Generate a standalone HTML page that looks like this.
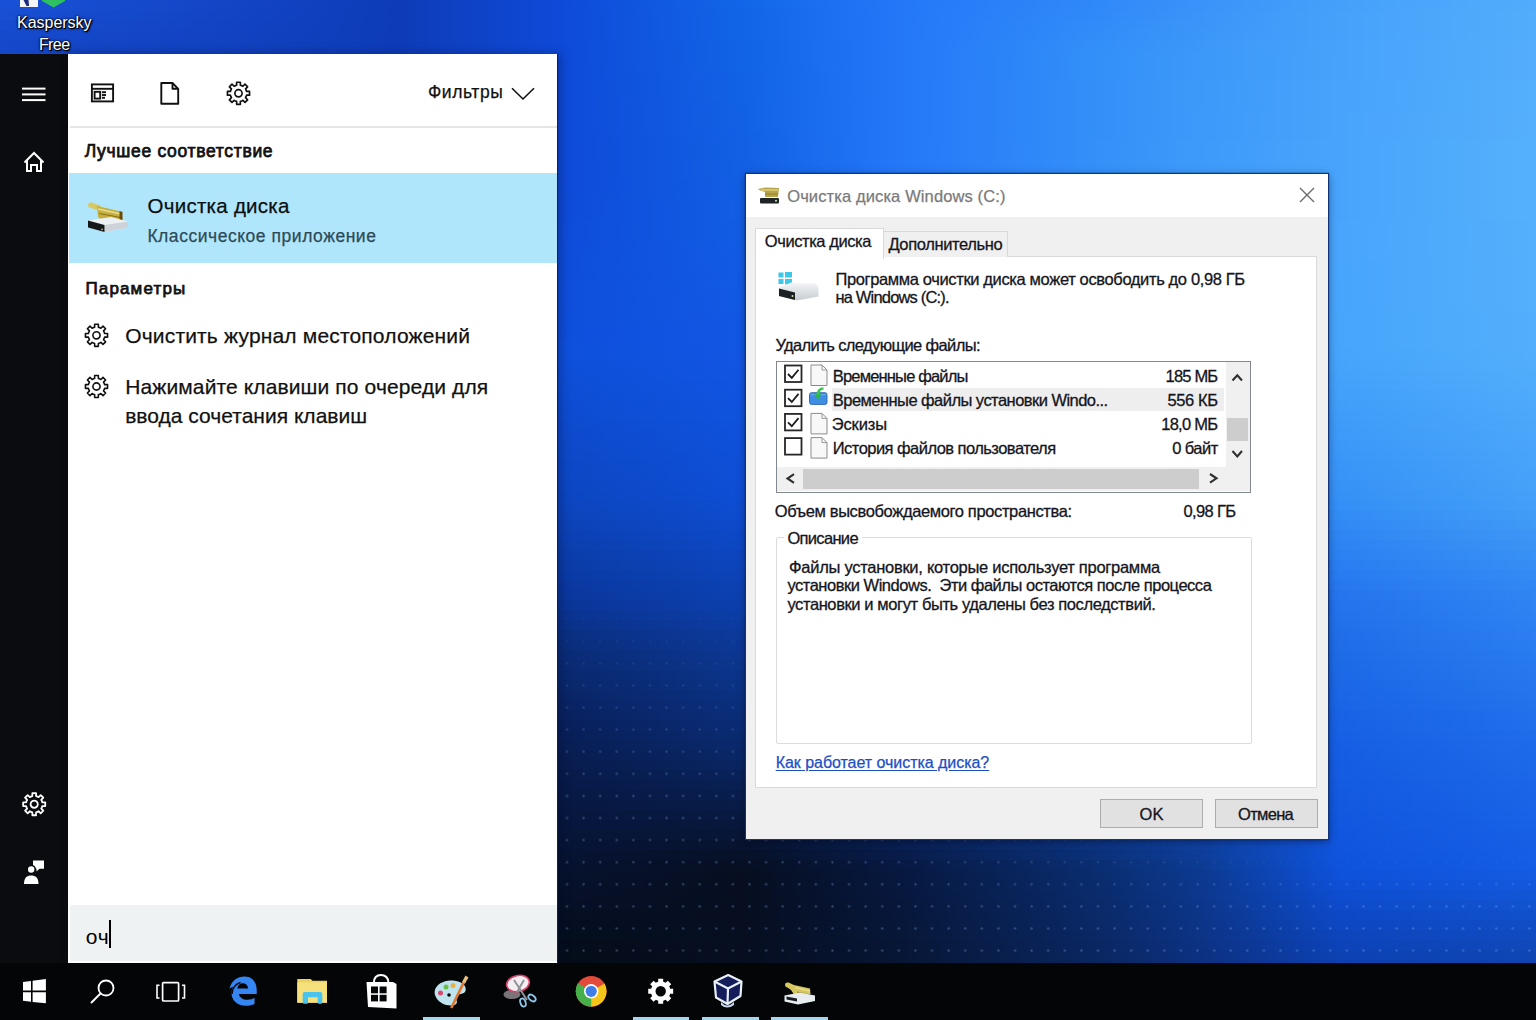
<!DOCTYPE html>
<html><head><meta charset="utf-8"><style>
html,body{margin:0;padding:0}
body{width:1536px;height:1020px;overflow:hidden;position:relative;font-family:"Liberation Sans", sans-serif;}
.a{position:absolute}
.t{position:absolute;white-space:pre;line-height:1;-webkit-text-stroke:0.25px currentColor}
svg{position:absolute;overflow:visible}

#bg{left:0;top:0;width:1536px;height:1020px;
 background:
  radial-gradient(ellipse 1000px 520px at 560px 1010px, rgba(4,9,22,1) 0%, rgba(5,13,32,0.95) 25%, rgba(8,28,80,0.72) 50%, rgba(12,45,130,0.3) 78%, rgba(12,50,150,0) 100%),
  linear-gradient(180deg, rgba(140,200,255,0.14) 0%, rgba(0,0,0,0) 40%, rgba(0,15,70,0.12) 75%, rgba(0,15,70,0.32) 100%),
  linear-gradient(90deg, #1246c6 0%, #1850d2 36%, #1f62e0 55%, #2f80ee 78%, #4aa2f6 100%);
}
#sidebar{left:0;top:54px;width:68px;height:909px;background:#0a0c0f}
#panel{left:68px;top:54px;width:489px;height:909px;background:#fff;box-shadow:1px 0 0 #0a2060,3px 0 10px rgba(0,10,40,0.35)}
#sep{left:70px;top:126px;width:487px;height:2px;background:#e6e6e6}
#hl{left:69px;top:173px;width:488px;height:90px;background:#b0e6fc}
#search{left:70px;top:905px;width:487px;height:56px;background:#eff2f2}
#cursor{left:109px;top:920px;width:2px;height:28px;background:#000}
#taskbar{left:0;top:963px;width:1536px;height:57px;background:#040507}
.ind{top:1017px;height:3px;background:#a6d4ec}
#dlg{left:745px;top:173px;width:582px;height:665px;background:#f0f0f0;border:1px solid #12347a;box-shadow:0 0 1px #0a2050,0 2px 8px rgba(0,0,20,0.35)}
#dtitle{left:746px;top:174px;width:582px;height:43px;background:#fff}
#tabpage{left:755px;top:256px;width:560px;height:530px;background:#fff;border:1px solid #d9d9d9}
#tab1{left:755px;top:228px;width:127px;height:30px;background:#fff;border:1px solid #d9d9d9;border-bottom:none}
#tab2{left:882px;top:231px;width:125px;height:25px;background:#f0f0f0;border:1px solid #d9d9d9;border-bottom:none;border-left:none}
#list{left:776px;top:361px;width:473px;height:130px;background:#fff;border:1px solid #828790}
#rowhl{left:832px;top:388px;width:392px;height:23px;background:#eeeeee}
#vsb{left:1226px;top:362px;width:24px;height:104px;background:#f0f0f0}
#vthumb{left:1227px;top:418px;width:21px;height:23px;background:#cdcdcd}
#hsb{left:777px;top:467px;width:449px;height:24px;background:#f0f0f0}
#hthumb{left:803px;top:469px;width:396px;height:20px;background:#cdcdcd}
#corner{left:1226px;top:466px;width:24px;height:25px;background:#f0f0f0}
#grp{left:776px;top:537px;width:474px;height:205px;border:1px solid #dcdcdc;border-radius:2px}
#grplbl{left:784px;top:530px;width:78px;height:14px;background:#fff}
.btn{top:799px;width:101px;height:27px;background:#e1e1e1;border:1px solid #adadad}

</style></head><body>

<div class="a" style="left:0;top:0px;width:1536px;height:10px;background:linear-gradient(90deg,#1951d6 0.00%,#1446c7 13.02%,#0e3cb8 26.04%,#0e4ad8 36.46%,#1266e8 48.50%,#2478f8 58.59%,#3089f8 71.61%,#3a93f9 78.12%,#45a0fa 87.24%,#52acfc 100.00%)"></div>
<div class="a" style="left:0;top:10px;width:1536px;height:10px;background:linear-gradient(90deg,#184fd3 0.00%,#1345c6 13.02%,#0e3cb8 26.04%,#0e4ad8 36.46%,#1265e7 48.50%,#2478f8 58.59%,#318af8 71.61%,#3b94f9 78.12%,#46a1fa 87.24%,#53adfc 100.00%)"></div>
<div class="a" style="left:0;top:20px;width:1536px;height:10px;background:linear-gradient(90deg,#174cd0 0.00%,#1344c4 13.02%,#0e3cb8 26.04%,#0e4ad8 36.46%,#1265e7 48.50%,#2478f8 58.59%,#318cf8 71.61%,#3b95f9 78.12%,#46a1fa 87.24%,#53adfc 100.00%)"></div>
<div class="a" style="left:0;top:30px;width:1536px;height:10px;background:linear-gradient(90deg,#164acd 0.00%,#1343c3 13.02%,#0e3cb8 26.04%,#0e4ad8 36.46%,#1265e7 48.50%,#2478f8 58.59%,#328df8 71.61%,#3b96f9 78.12%,#46a1fb 87.24%,#53adfc 100.00%)"></div>
<div class="a" style="left:0;top:40px;width:1536px;height:10px;background:linear-gradient(90deg,#1548ca 0.00%,#1243c1 13.02%,#0e3cb8 26.04%,#0e4ad8 36.46%,#1264e6 48.50%,#2478f8 58.59%,#338ff8 71.61%,#3c97f9 78.12%,#47a2fb 87.24%,#54aefc 100.00%)"></div>
<div class="a" style="left:0;top:50px;width:1536px;height:10px;background:linear-gradient(90deg,#1446c8 0.00%,#1242c0 13.02%,#0e3cb8 26.04%,#0e4ad8 36.46%,#1264e6 48.50%,#2478f8 58.59%,#3390f8 71.61%,#3c98f9 78.12%,#47a2fb 87.24%,#54aefc 100.00%)"></div>
<div class="a" style="left:0;top:60px;width:1536px;height:10px;background:linear-gradient(90deg,#1446c8 0.00%,#1242c0 13.02%,#0e3cb8 26.04%,#0e4ad8 36.46%,#1264e6 48.50%,#2478f8 58.59%,#3390f8 71.61%,#3c98f9 78.12%,#47a2fb 87.24%,#54aefc 100.00%)"></div>
<div class="a" style="left:0;top:70px;width:1536px;height:10px;background:linear-gradient(90deg,#1446c8 0.00%,#1242c0 13.02%,#0e3cb8 26.04%,#0e4ad8 36.46%,#1263e6 48.50%,#2478f8 58.59%,#3390f8 71.61%,#3c98f9 78.12%,#47a2fb 87.24%,#54aefc 100.00%)"></div>
<div class="a" style="left:0;top:80px;width:1536px;height:10px;background:linear-gradient(90deg,#1446c8 0.00%,#1242c0 13.02%,#0e3cb8 26.04%,#0e4ad8 36.46%,#1263e5 48.50%,#2478f8 58.59%,#3490f8 71.61%,#3d99f9 78.12%,#47a3fb 87.24%,#54affc 100.00%)"></div>
<div class="a" style="left:0;top:90px;width:1536px;height:10px;background:linear-gradient(90deg,#1446c8 0.00%,#1242c0 13.02%,#0e3cb8 26.04%,#0e4ad8 36.46%,#1263e5 48.50%,#2478f8 58.59%,#3490f8 71.61%,#3d99f9 78.12%,#47a3fb 87.24%,#54affc 100.00%)"></div>
<div class="a" style="left:0;top:100px;width:1536px;height:10px;background:linear-gradient(90deg,#1446c8 0.00%,#1242c0 13.02%,#0e3cb8 26.04%,#0e4ad8 36.46%,#1262e5 48.50%,#2478f8 58.59%,#3490f8 71.61%,#3d99f9 78.12%,#47a3fb 87.24%,#54affc 100.00%)"></div>
<div class="a" style="left:0;top:110px;width:1536px;height:10px;background:linear-gradient(90deg,#1446c8 0.00%,#1242c0 13.02%,#0e3cb8 26.04%,#0e4ad8 36.46%,#1262e5 48.50%,#2478f8 58.59%,#3490f8 71.61%,#3d99fa 78.12%,#48a3fb 87.24%,#55affc 100.00%)"></div>
<div class="a" style="left:0;top:120px;width:1536px;height:10px;background:linear-gradient(90deg,#1446c8 0.00%,#1242c0 13.02%,#0e3cb8 26.04%,#0e4ad8 36.46%,#1262e5 48.50%,#2478f8 58.59%,#3490f8 71.61%,#3d99fa 78.12%,#48a3fb 87.24%,#55affc 100.00%)"></div>
<div class="a" style="left:0;top:130px;width:1536px;height:10px;background:linear-gradient(90deg,#1446c8 0.00%,#1242c0 13.02%,#0e3cb8 26.04%,#0e4ad8 36.46%,#1261e5 48.50%,#2478f8 58.59%,#3490f8 71.61%,#3d99fa 78.12%,#48a3fb 87.24%,#55affc 100.00%)"></div>
<div class="a" style="left:0;top:140px;width:1536px;height:10px;background:linear-gradient(90deg,#1446c8 0.00%,#1242c0 13.02%,#0e3cb8 26.04%,#0e4ad8 36.46%,#1261e4 48.50%,#2478f8 58.59%,#3590f8 71.61%,#3e9afa 78.12%,#48a4fb 87.24%,#55b0fc 100.00%)"></div>
<div class="a" style="left:0;top:150px;width:1536px;height:10px;background:linear-gradient(90deg,#1446c8 0.00%,#1242c0 13.02%,#0e3cb8 26.04%,#0e4ad8 36.46%,#1261e4 48.50%,#2478f8 58.59%,#3590f8 71.61%,#3e9afa 78.12%,#48a4fb 87.24%,#55b0fc 100.00%)"></div>
<div class="a" style="left:0;top:160px;width:1536px;height:10px;background:linear-gradient(90deg,#1446c8 0.00%,#1242c0 13.02%,#0e3cb8 26.04%,#0e4ad8 36.46%,#1260e4 48.50%,#2478f8 58.59%,#3590f8 71.61%,#3e9afa 78.12%,#48a4fb 87.24%,#55b0fc 100.00%)"></div>
<div class="a" style="left:0;top:170px;width:1536px;height:10px;background:linear-gradient(90deg,#1446c8 0.00%,#1242c0 13.02%,#0e3cb8 26.04%,#0e4ad8 36.46%,#1260e4 48.50%,#2478f8 58.59%,#3590f8 71.61%,#3e9afa 78.12%,#48a4fb 87.24%,#55b0fc 100.00%)"></div>
<div class="a" style="left:0;top:180px;width:1536px;height:10px;background:linear-gradient(90deg,#1446c8 0.00%,#1242c0 13.02%,#0e3cb8 26.04%,#0e4ad8 36.46%,#125fe4 48.50%,#2478f8 58.59%,#3590f8 71.61%,#3e9afa 78.12%,#48a4fb 87.24%,#55b0fc 100.00%)"></div>
<div class="a" style="left:0;top:190px;width:1536px;height:10px;background:linear-gradient(90deg,#1446c8 0.00%,#1242c0 13.02%,#0e3cb8 26.04%,#0e4bd8 36.46%,#125fe4 48.50%,#2477f7 58.59%,#348ff8 71.61%,#3e9afa 78.12%,#48a4fb 87.24%,#55b0fc 100.00%)"></div>
<div class="a" style="left:0;top:200px;width:1536px;height:10px;background:linear-gradient(90deg,#1446c8 0.00%,#1242c0 13.02%,#0e3cb8 26.04%,#0e4bd9 36.46%,#125ee4 48.50%,#2377f7 58.59%,#348ff8 71.61%,#3d99fa 78.12%,#48a4fb 87.24%,#55b0fc 100.00%)"></div>
<div class="a" style="left:0;top:210px;width:1536px;height:10px;background:linear-gradient(90deg,#1446c8 0.00%,#1242c0 13.02%,#0e3cb8 26.04%,#0e4bd9 36.46%,#125ee4 48.50%,#2376f6 58.59%,#348ef8 71.61%,#3d99fa 78.12%,#48a4fb 87.24%,#55b0fc 100.00%)"></div>
<div class="a" style="left:0;top:220px;width:1536px;height:10px;background:linear-gradient(90deg,#1446c8 0.00%,#1242c0 13.02%,#0e3cb8 26.04%,#0e4cd9 36.46%,#125de4 48.50%,#2376f6 58.59%,#348ef8 71.61%,#3d99fa 78.12%,#48a5fb 87.24%,#54affc 100.00%)"></div>
<div class="a" style="left:0;top:230px;width:1536px;height:10px;background:linear-gradient(90deg,#1446c8 0.00%,#1242c0 13.02%,#0e3cb8 26.04%,#0e4cd9 36.46%,#125de4 48.50%,#2375f5 58.59%,#338df8 71.61%,#3d99fa 78.12%,#48a5fb 87.24%,#54affc 100.00%)"></div>
<div class="a" style="left:0;top:240px;width:1536px;height:10px;background:linear-gradient(90deg,#1446c8 0.00%,#1242c0 13.02%,#0e3cb8 26.04%,#0e4cda 36.46%,#125ce4 48.50%,#2275f5 58.59%,#338df8 71.61%,#3c98fa 78.12%,#48a5fb 87.24%,#54affc 100.00%)"></div>
<div class="a" style="left:0;top:250px;width:1536px;height:10px;background:linear-gradient(90deg,#1446c8 0.00%,#1242c0 13.02%,#0e3cb8 26.04%,#0e4dda 36.46%,#125be4 48.50%,#2274f4 58.59%,#338cf8 71.61%,#3c98fa 78.12%,#48a5fb 87.24%,#54affc 100.00%)"></div>
<div class="a" style="left:0;top:260px;width:1536px;height:10px;background:linear-gradient(90deg,#1446c8 0.00%,#1242c0 13.02%,#0e3cb8 26.04%,#0e4dda 36.46%,#125be4 48.50%,#2274f4 58.59%,#328cf8 71.61%,#3c98fa 78.12%,#47a5fb 87.24%,#54affc 100.00%)"></div>
<div class="a" style="left:0;top:270px;width:1536px;height:10px;background:linear-gradient(90deg,#1446c8 0.00%,#1242c0 13.02%,#0e3cb8 26.04%,#0e4dda 36.46%,#125ae4 48.50%,#2273f3 58.59%,#328bf8 71.61%,#3c98fa 78.12%,#47a5fb 87.24%,#54affc 100.00%)"></div>
<div class="a" style="left:0;top:280px;width:1536px;height:10px;background:linear-gradient(90deg,#1446c8 0.00%,#1242c0 13.02%,#0e3cb8 26.04%,#0e4edb 36.46%,#125ae4 48.50%,#2173f3 58.59%,#328bf8 71.61%,#3b97fa 78.12%,#47a5fb 87.24%,#54affc 100.00%)"></div>
<div class="a" style="left:0;top:290px;width:1536px;height:10px;background:linear-gradient(90deg,#1446c8 0.00%,#1242c0 13.02%,#0e3cb8 26.04%,#0e4edb 36.46%,#1259e4 48.50%,#2173f3 58.59%,#328bf8 71.61%,#3b97fa 78.12%,#47a5fb 87.24%,#54affc 100.00%)"></div>
<div class="a" style="left:0;top:300px;width:1536px;height:10px;background:linear-gradient(90deg,#1446c8 0.00%,#1242c0 13.02%,#0e3cb8 26.04%,#0e4edb 36.46%,#1259e4 48.50%,#2172f2 58.59%,#318af8 71.61%,#3b97fa 78.12%,#47a5fb 87.24%,#54affc 100.00%)"></div>
<div class="a" style="left:0;top:310px;width:1536px;height:10px;background:linear-gradient(90deg,#1446c8 0.00%,#1242c0 13.02%,#0e3cb8 26.04%,#0e4fdb 36.46%,#1258e4 48.50%,#2172f2 58.59%,#318af8 71.61%,#3b97fa 78.12%,#47a6fb 87.24%,#53aefc 100.00%)"></div>
<div class="a" style="left:0;top:320px;width:1536px;height:10px;background:linear-gradient(90deg,#1446c8 0.00%,#1242c0 13.02%,#0e3cb8 26.04%,#0e4fdb 36.46%,#1257e4 48.50%,#2171f1 58.59%,#3189f8 71.61%,#3b97fa 78.12%,#47a6fb 87.24%,#53aefc 100.00%)"></div>
<div class="a" style="left:0;top:330px;width:1536px;height:10px;background:linear-gradient(90deg,#1446c8 0.00%,#1242c0 13.02%,#0e3cb8 26.04%,#0e4fdc 36.46%,#1257e4 48.50%,#2071f1 58.59%,#3089f8 71.61%,#3a96fa 78.12%,#47a6fb 87.24%,#53aefc 100.00%)"></div>
<div class="a" style="left:0;top:340px;width:1536px;height:10px;background:linear-gradient(90deg,#1446c8 0.00%,#1242c0 13.02%,#0e3cb8 26.04%,#0e50dc 36.46%,#1256e4 48.50%,#2070f0 58.59%,#3088f8 71.61%,#3a96fa 78.12%,#47a6fb 87.24%,#53aefc 100.00%)"></div>
<div class="a" style="left:0;top:350px;width:1536px;height:10px;background:linear-gradient(90deg,#1446c8 0.00%,#1242c0 13.02%,#0e3cb8 26.04%,#0e50db 36.46%,#1256e3 48.50%,#2070f0 58.59%,#3088f8 71.61%,#3a96fa 78.12%,#46a5fb 87.24%,#52aefc 100.00%)"></div>
<div class="a" style="left:0;top:360px;width:1536px;height:10px;background:linear-gradient(90deg,#1446c8 0.00%,#1242c0 13.02%,#0e3cb8 26.04%,#0e4fd9 36.46%,#1255e2 48.50%,#1f6fef 58.59%,#2f87f7 71.61%,#3995f9 78.12%,#45a4fa 87.24%,#52adfc 100.00%)"></div>
<div class="a" style="left:0;top:370px;width:1536px;height:10px;background:linear-gradient(90deg,#1446c8 0.00%,#1242c0 13.02%,#0e3cb8 26.04%,#0e4ed7 36.46%,#1155e1 48.50%,#1f6fef 58.59%,#2f87f7 71.61%,#3894f9 78.12%,#44a2fa 87.24%,#50acfb 100.00%)"></div>
<div class="a" style="left:0;top:380px;width:1536px;height:10px;background:linear-gradient(90deg,#1446c8 0.00%,#1242c0 13.02%,#0e3cb8 26.04%,#0e4ed5 36.46%,#1154e0 48.50%,#1f6eee 58.59%,#2f86f6 71.61%,#3893f9 78.12%,#43a1fa 87.24%,#50abfb 100.00%)"></div>
<div class="a" style="left:0;top:390px;width:1536px;height:10px;background:linear-gradient(90deg,#1446c8 0.00%,#1242c0 13.02%,#0e3cb8 26.04%,#0d4dd4 36.46%,#1154df 48.50%,#1e6eee 58.59%,#2e86f6 71.61%,#3792f8 78.12%,#429ffa 87.24%,#4eaafb 100.00%)"></div>
<div class="a" style="left:0;top:400px;width:1536px;height:10px;background:linear-gradient(90deg,#1446c8 0.00%,#1242c0 13.02%,#0e3cb8 26.04%,#0d4cd2 36.46%,#1153de 48.50%,#1e6ded 58.59%,#2e85f5 71.61%,#3691f8 78.12%,#409ef9 87.24%,#4ea9fb 100.00%)"></div>
<div class="a" style="left:0;top:410px;width:1536px;height:10px;background:linear-gradient(90deg,#1446c8 0.00%,#1242c0 13.02%,#0e3cb8 26.04%,#0d4cd0 36.46%,#1053dd 48.50%,#1d6ded 58.59%,#2d85f5 71.61%,#3690f7 78.12%,#3f9cf9 87.24%,#4ca8fa 100.00%)"></div>
<div class="a" style="left:0;top:420px;width:1536px;height:10px;background:linear-gradient(90deg,#1446c8 0.00%,#1242c0 13.02%,#0e3cb8 26.04%,#0d4bce 36.46%,#1052dc 48.50%,#1d6cec 58.59%,#2d84f4 71.61%,#358ff7 78.12%,#3e9bf8 87.24%,#4ca7fa 100.00%)"></div>
<div class="a" style="left:0;top:430px;width:1536px;height:10px;background:linear-gradient(90deg,#1446c8 0.00%,#1242c0 13.02%,#0e3cb8 26.04%,#0d4acc 36.46%,#1051db 48.50%,#1d6beb 58.59%,#2d83f3 71.61%,#348ef7 78.12%,#3d9af8 87.24%,#4aa6fa 100.00%)"></div>
<div class="a" style="left:0;top:440px;width:1536px;height:10px;background:linear-gradient(90deg,#1446c8 0.00%,#1242c0 13.02%,#0e3cb8 26.04%,#0d4aca 36.46%,#0f51da 48.50%,#1c6beb 58.59%,#2c83f3 71.61%,#348df6 78.12%,#3c98f8 87.24%,#4aa5f9 100.00%)"></div>
<div class="a" style="left:0;top:450px;width:1536px;height:10px;background:linear-gradient(90deg,#1446c8 0.00%,#1242c0 13.02%,#0e3cb8 26.04%,#0d49c8 36.46%,#0f50d9 48.50%,#1c6aea 58.59%,#2c82f2 71.61%,#338cf6 78.12%,#3a97f8 87.24%,#48a4f9 100.00%)"></div>
<div class="a" style="left:0;top:460px;width:1536px;height:10px;background:linear-gradient(90deg,#1446c8 0.00%,#1242c0 13.02%,#0e3cb8 26.04%,#0c48c7 36.46%,#0f50d8 48.50%,#1b6aea 58.59%,#2b82f2 71.61%,#328bf5 78.12%,#3995f7 87.24%,#48a3f9 100.00%)"></div>
<div class="a" style="left:0;top:470px;width:1536px;height:10px;background:linear-gradient(90deg,#1446c8 0.00%,#1242c0 13.02%,#0e3cb8 26.04%,#0c48c5 36.46%,#0f4fd7 48.50%,#1b69e9 58.59%,#2b81f1 71.61%,#328af5 78.12%,#3894f7 87.24%,#46a2f9 100.00%)"></div>
<div class="a" style="left:0;top:480px;width:1536px;height:10px;background:linear-gradient(90deg,#1446c8 0.00%,#1242c0 13.02%,#0e3cb8 26.04%,#0c47c3 36.46%,#0e4fd6 48.50%,#1b69e9 58.59%,#2b81f1 71.61%,#3189f5 78.12%,#3792f6 87.24%,#46a1f8 100.00%)"></div>
<div class="a" style="left:0;top:490px;width:1536px;height:10px;background:linear-gradient(90deg,#1446c8 0.00%,#1242c0 13.02%,#0e3cb8 26.04%,#0c46c1 36.46%,#0e4ed5 48.50%,#1a68e8 58.59%,#2a80f0 71.61%,#3088f4 78.12%,#3691f6 87.24%,#44a0f8 100.00%)"></div>
<div class="a" style="left:0;top:500px;width:1536px;height:10px;background:linear-gradient(90deg,#1446c8 0.00%,#1242c0 13.02%,#0e3cb8 26.04%,#0c45be 36.46%,#0e4dd2 48.50%,#1a67e7 58.59%,#297ff0 71.61%,#2f87f4 78.12%,#348ff6 87.24%,#439ff8 100.00%)"></div>
<div class="a" style="left:0;top:510px;width:1536px;height:10px;background:linear-gradient(90deg,#1446c8 0.00%,#1242c0 13.02%,#0e3cb8 26.04%,#0c44ba 36.46%,#0e4ccf 48.50%,#1966e6 58.59%,#287def 71.61%,#2e84f3 78.12%,#328cf5 87.24%,#419cf7 100.00%)"></div>
<div class="a" style="left:0;top:520px;width:1536px;height:10px;background:linear-gradient(90deg,#1446c8 0.00%,#1242c0 13.02%,#0e3cb8 26.04%,#0c42b6 36.46%,#0e4acb 48.50%,#1864e4 58.59%,#277bee 71.61%,#2c82f2 78.12%,#3189f4 87.24%,#3f99f6 100.00%)"></div>
<div class="a" style="left:0;top:530px;width:1536px;height:10px;background:linear-gradient(90deg,#1446c8 0.00%,#1242c0 13.02%,#0e3cb8 26.04%,#0b40b3 36.46%,#0d49c7 48.50%,#1862e2 58.59%,#2679ed 71.61%,#2b80f1 78.12%,#2f86f3 87.24%,#3d96f6 100.00%)"></div>
<div class="a" style="left:0;top:540px;width:1536px;height:10px;background:linear-gradient(90deg,#1446c8 0.00%,#1242c0 13.02%,#0e3cb8 26.04%,#0b3faf 36.46%,#0d48c4 48.50%,#1761e1 58.59%,#2577ec 71.61%,#2a7df0 78.12%,#2d83f2 87.24%,#3b93f5 100.00%)"></div>
<div class="a" style="left:0;top:550px;width:1536px;height:10px;background:linear-gradient(90deg,#1446c8 0.00%,#1242c0 13.02%,#0e3cb8 26.04%,#0b3dab 36.46%,#0d46c0 48.50%,#175fdf 58.59%,#2375ec 71.61%,#287bf0 78.12%,#2c81f2 87.24%,#3891f5 100.00%)"></div>
<div class="a" style="left:0;top:560px;width:1536px;height:10px;background:linear-gradient(90deg,#1446c8 0.00%,#1242c0 13.02%,#0e3cb8 26.04%,#0b3ca7 36.46%,#0d45bd 48.50%,#165ede 58.59%,#2273eb 71.61%,#2778ef 78.12%,#2a7ef1 87.24%,#368ef4 100.00%)"></div>
<div class="a" style="left:0;top:570px;width:1536px;height:10px;background:linear-gradient(90deg,#1446c8 0.00%,#1242c0 13.02%,#0e3cb8 26.04%,#0a3aa4 36.46%,#0c44b9 48.50%,#165cdc 58.59%,#2171ea 71.61%,#2676ee 78.12%,#287bf0 87.24%,#348bf4 100.00%)"></div>
<div class="a" style="left:0;top:580px;width:1536px;height:10px;background:linear-gradient(90deg,#1446c8 0.00%,#1242c0 13.02%,#0e3cb8 26.04%,#0a38a0 36.46%,#0c42b5 48.50%,#155ada 58.59%,#206fe9 71.61%,#2474ed 78.12%,#2778ef 87.24%,#3288f3 100.00%)"></div>
<div class="a" style="left:0;top:590px;width:1536px;height:10px;background:linear-gradient(90deg,#1446c8 0.00%,#1242c0 13.02%,#0e3cb8 26.04%,#0a379c 36.46%,#0c41b2 48.50%,#1459d9 58.59%,#1f6de8 71.61%,#2371ec 78.12%,#2575ee 87.24%,#3085f2 100.00%)"></div>
<div class="a" style="left:0;top:600px;width:1536px;height:10px;background:linear-gradient(90deg,#1446c8 0.00%,#1242c0 13.02%,#0e3cb8 26.04%,#0a3597 36.46%,#0c3fad 48.50%,#1457d6 58.59%,#1e6be7 71.61%,#216feb 78.12%,#2373ed 87.24%,#2f83f2 100.00%)"></div>
<div class="a" style="left:0;top:610px;width:1536px;height:10px;background:linear-gradient(90deg,#1446c8 0.00%,#1242c0 13.02%,#0e3cb8 26.04%,#0a3390 36.46%,#0c3ea8 48.50%,#1356d3 58.59%,#1d6ae6 71.61%,#206eea 78.12%,#2272ec 87.24%,#2e82f1 100.00%)"></div>
<div class="a" style="left:0;top:620px;width:1536px;height:10px;background:linear-gradient(90deg,#1446c8 0.00%,#1242c0 13.02%,#0e3cb8 26.04%,#0a3189 36.46%,#0c3ca2 48.50%,#1254d0 58.59%,#1c68e4 71.61%,#1f6ce8 78.12%,#2170eb 87.24%,#2c80f1 100.00%)"></div>
<div class="a" style="left:0;top:630px;width:1536px;height:10px;background:linear-gradient(90deg,#1446c8 0.00%,#1242c0 13.02%,#0e3cb8 26.04%,#0a2f82 36.46%,#0c3a9c 48.50%,#1152cd 58.59%,#1b66e2 71.61%,#1e6ae6 78.12%,#206eea 87.24%,#2c7ef1 100.00%)"></div>
<div class="a" style="left:0;top:640px;width:1536px;height:10px;background:linear-gradient(90deg,#1446c8 0.00%,#1242c0 13.02%,#0e3cb8 26.04%,#0a2d7b 36.46%,#0c3997 48.50%,#1051ca 58.59%,#1a65e1 71.61%,#1d69e5 78.12%,#1f6de9 87.24%,#2a7df0 100.00%)"></div>
<div class="a" style="left:0;top:650px;width:1536px;height:10px;background:linear-gradient(90deg,#1446c8 0.00%,#1242c0 13.02%,#0e3cb8 26.04%,#0a2b76 36.46%,#0c3792 48.50%,#104fc5 58.59%,#1a63df 71.61%,#1c67e3 78.12%,#1e6be8 87.24%,#297bf0 100.00%)"></div>
<div class="a" style="left:0;top:660px;width:1536px;height:10px;background:linear-gradient(90deg,#1446c8 0.00%,#1242c0 13.02%,#0e3cb8 26.04%,#0a2a72 36.46%,#0c368e 48.50%,#0f4cc0 58.59%,#1961dc 71.61%,#1b65e2 78.12%,#1d6ae7 87.24%,#2879ef 100.00%)"></div>
<div class="a" style="left:0;top:670px;width:1536px;height:10px;background:linear-gradient(90deg,#1446c8 0.00%,#1242c0 13.02%,#0e3cb8 26.04%,#09286e 36.46%,#0b348a 48.50%,#0f4abb 58.59%,#185ed9 71.61%,#1a64e1 78.12%,#1c69e7 87.24%,#2778ee 100.00%)"></div>
<div class="a" style="left:0;top:680px;width:1536px;height:10px;background:linear-gradient(90deg,#1446c8 0.00%,#1242c0 13.02%,#0e3cb8 26.04%,#09276a 36.46%,#0b3386 48.50%,#0e47b5 58.59%,#175cd7 71.61%,#1962df 78.12%,#1b67e6 87.24%,#2576ee 100.00%)"></div>
<div class="a" style="left:0;top:690px;width:1536px;height:10px;background:linear-gradient(90deg,#1446c8 0.00%,#1242c0 13.02%,#0e3cb8 26.04%,#092566 36.46%,#0b3182 48.50%,#0e45b0 58.59%,#165ad4 71.61%,#1860de 78.12%,#1a66e6 87.24%,#2474ed 100.00%)"></div>
<div class="a" style="left:0;top:700px;width:1536px;height:10px;background:linear-gradient(90deg,#1446c8 0.00%,#1242c0 13.02%,#0e3cb8 26.04%,#092363 36.46%,#0b2f7e 48.50%,#0e43ab 58.59%,#1558d1 71.61%,#175edd 78.12%,#1965e6 87.24%,#2372ec 100.00%)"></div>
<div class="a" style="left:0;top:710px;width:1536px;height:10px;background:linear-gradient(90deg,#1446c8 0.00%,#1242c0 13.02%,#0e3cb8 26.04%,#09225f 36.46%,#0b2e7a 48.50%,#0d40a5 58.59%,#1456cf 71.61%,#165cdb 78.12%,#1863e5 87.24%,#2170ec 100.00%)"></div>
<div class="a" style="left:0;top:720px;width:1536px;height:10px;background:linear-gradient(90deg,#1446c8 0.00%,#1242c0 13.02%,#0e3cb8 26.04%,#08205b 36.46%,#0a2c76 48.50%,#0d3ea0 58.59%,#1353cc 71.61%,#155bda 78.12%,#1762e5 87.24%,#206feb 100.00%)"></div>
<div class="a" style="left:0;top:730px;width:1536px;height:10px;background:linear-gradient(90deg,#1446c8 0.00%,#1242c0 13.02%,#0e3cb8 26.04%,#081f57 36.46%,#0a2b72 48.50%,#0c3b9b 58.59%,#1251c9 71.61%,#1459d9 78.12%,#1661e4 87.24%,#1f6dea 100.00%)"></div>
<div class="a" style="left:0;top:740px;width:1536px;height:10px;background:linear-gradient(90deg,#1446c8 0.00%,#1242c0 13.02%,#0e3cb8 26.04%,#081e54 36.46%,#0a296d 48.50%,#0c3995 58.59%,#124fc5 71.61%,#1457d5 78.12%,#165fe4 87.24%,#1e6bea 100.00%)"></div>
<div class="a" style="left:0;top:750px;width:1536px;height:10px;background:linear-gradient(90deg,#1446c8 0.00%,#1242c0 13.02%,#0e3cb8 26.04%,#081d50 36.46%,#0a2767 48.50%,#0b368e 58.59%,#114cbe 71.61%,#1355d0 78.12%,#155ee3 87.24%,#1d6ae9 100.00%)"></div>
<div class="a" style="left:0;top:760px;width:1536px;height:10px;background:linear-gradient(90deg,#1446c8 0.00%,#1242c0 13.02%,#0e3cb8 26.04%,#081c4e 36.46%,#092561 48.50%,#0b3387 58.59%,#1049b7 71.61%,#1252ca 78.12%,#145de2 87.24%,#1c69e9 100.00%)"></div>
<div class="a" style="left:0;top:770px;width:1536px;height:10px;background:linear-gradient(90deg,#1446c8 0.00%,#1242c0 13.02%,#0e3cb8 26.04%,#071b4a 36.46%,#09225a 48.50%,#0b3180 58.59%,#1047b0 71.61%,#1250c5 78.12%,#145ce2 87.24%,#1b68e8 100.00%)"></div>
<div class="a" style="left:0;top:780px;width:1536px;height:10px;background:linear-gradient(90deg,#1446c8 0.00%,#1242c0 13.02%,#0e3cb8 26.04%,#071a48 36.46%,#092054 48.50%,#0a2e7a 58.59%,#0f44aa 71.61%,#114ebf 78.12%,#135be1 87.24%,#1b66e8 100.00%)"></div>
<div class="a" style="left:0;top:790px;width:1536px;height:10px;background:linear-gradient(90deg,#1446c8 0.00%,#1242c0 13.02%,#0e3cb8 26.04%,#071944 36.46%,#081e4e 48.50%,#0a2c73 58.59%,#0f41a3 71.61%,#114bba 78.12%,#135ae1 87.24%,#1a65e7 100.00%)"></div>
<div class="a" style="left:0;top:800px;width:1536px;height:10px;background:linear-gradient(90deg,#1446c8 0.00%,#1242c0 13.02%,#0e3cb8 26.04%,#071842 36.46%,#081c48 48.50%,#0a296c 58.59%,#0e3e9c 71.61%,#1049b4 78.12%,#1259e0 87.24%,#1964e7 100.00%)"></div>
<div class="a" style="left:0;top:810px;width:1536px;height:10px;background:linear-gradient(90deg,#1446c8 0.00%,#1242c0 13.02%,#0e3cb8 26.04%,#07173e 36.46%,#081a42 48.50%,#092665 58.59%,#0d3c95 71.61%,#0f47ae 78.12%,#1158df 87.24%,#1863e7 100.00%)"></div>
<div class="a" style="left:0;top:820px;width:1536px;height:10px;background:linear-gradient(90deg,#1446c8 0.00%,#1242c0 13.02%,#0e3cb8 26.04%,#07163c 36.46%,#07183c 48.50%,#09245e 58.59%,#0d398e 71.61%,#0f44a9 78.12%,#1157df 87.24%,#1762e6 100.00%)"></div>
<div class="a" style="left:0;top:830px;width:1536px;height:10px;background:linear-gradient(90deg,#1446c8 0.00%,#1242c0 13.02%,#0e3cb8 26.04%,#071538 36.46%,#071636 48.50%,#082158 58.59%,#0c3688 71.61%,#0e42a3 78.12%,#1056de 87.24%,#1760e6 100.00%)"></div>
<div class="a" style="left:0;top:840px;width:1536px;height:10px;background:linear-gradient(90deg,#1446c8 0.00%,#1242c0 13.02%,#0e3cb8 26.04%,#061436 36.46%,#07132f 48.50%,#081f51 58.59%,#0c3481 71.61%,#0e409e 78.12%,#1055de 87.24%,#165fe5 100.00%)"></div>
<div class="a" style="left:0;top:850px;width:1536px;height:10px;background:linear-gradient(90deg,#1446c8 0.00%,#1242c0 13.02%,#0e3cb8 26.04%,#061332 36.46%,#061129 48.50%,#081c4a 58.59%,#0b317a 71.61%,#0d3d98 78.12%,#0f54dd 87.24%,#155ee5 100.00%)"></div>
<div class="a" style="left:0;top:860px;width:1536px;height:10px;background:linear-gradient(90deg,#1446c8 0.00%,#1242c0 13.02%,#0e3cb8 26.04%,#061230 36.46%,#060f23 48.50%,#071943 58.59%,#0a2e73 71.61%,#0c3b93 78.12%,#0e53dc 87.24%,#145de4 100.00%)"></div>
<div class="a" style="left:0;top:870px;width:1536px;height:10px;background:linear-gradient(90deg,#1446c8 0.00%,#1242c0 13.02%,#0e3cb8 26.04%,#06122d 36.46%,#060e20 48.50%,#07183f 58.59%,#0a2d6f 71.61%,#0c398f 78.12%,#0e51da 87.24%,#145be1 100.00%)"></div>
<div class="a" style="left:0;top:880px;width:1536px;height:10px;background:linear-gradient(90deg,#1446c8 0.00%,#1242c0 13.02%,#0e3cb8 26.04%,#06112a 36.46%,#060e20 48.50%,#07183e 58.59%,#0a2c6d 71.61%,#0c388d 78.12%,#0e4fd5 87.24%,#1358dc 100.00%)"></div>
<div class="a" style="left:0;top:890px;width:1536px;height:10px;background:linear-gradient(90deg,#1446c8 0.00%,#1242c0 13.02%,#0e3cb8 26.04%,#061028 36.46%,#060e20 48.50%,#07173d 58.59%,#0a2b6c 71.61%,#0c378c 78.12%,#0d4dd0 87.24%,#1256d6 100.00%)"></div>
<div class="a" style="left:0;top:900px;width:1536px;height:10px;background:linear-gradient(90deg,#1446c8 0.00%,#1242c0 13.02%,#0e3cb8 26.04%,#061026 36.46%,#060e20 48.50%,#07173b 58.59%,#0a2a6a 71.61%,#0c368a 78.12%,#0d4bcb 87.24%,#1253d0 100.00%)"></div>
<div class="a" style="left:0;top:910px;width:1536px;height:10px;background:linear-gradient(90deg,#1446c8 0.00%,#1242c0 13.02%,#0e3cb8 26.04%,#060f23 36.46%,#060e20 48.50%,#07173a 58.59%,#0a2a68 71.61%,#0c3588 78.12%,#0d49c7 87.24%,#1150cb 100.00%)"></div>
<div class="a" style="left:0;top:920px;width:1536px;height:10px;background:linear-gradient(90deg,#1446c8 0.00%,#1242c0 13.02%,#0e3cb8 26.04%,#050e21 36.46%,#060e20 48.50%,#071739 58.59%,#0a2967 71.61%,#0c3487 78.12%,#0d47c2 87.24%,#104ec5 100.00%)"></div>
<div class="a" style="left:0;top:930px;width:1536px;height:10px;background:linear-gradient(90deg,#1446c8 0.00%,#1242c0 13.02%,#0e3cb8 26.04%,#050e1f 36.46%,#060e20 48.50%,#071738 58.59%,#0a2865 71.61%,#0c3385 78.12%,#0d45bd 87.24%,#104bc0 100.00%)"></div>
<div class="a" style="left:0;top:940px;width:1536px;height:10px;background:linear-gradient(90deg,#1446c8 0.00%,#1242c0 13.02%,#0e3cb8 26.04%,#050d1c 36.46%,#060e20 48.50%,#071636 58.59%,#0a2763 71.61%,#0c3283 78.12%,#0c43b9 87.24%,#0f49ba 100.00%)"></div>
<div class="a" style="left:0;top:950px;width:1536px;height:10px;background:linear-gradient(90deg,#1446c8 0.00%,#1242c0 13.02%,#0e3cb8 26.04%,#050d1a 36.46%,#060e20 48.50%,#071635 58.59%,#0a2761 71.61%,#0c3181 78.12%,#0c42b4 87.24%,#0f46b4 100.00%)"></div>
<div class="a" style="left:0;top:960px;width:1536px;height:10px;background:linear-gradient(90deg,#1446c8 0.00%,#1242c0 13.02%,#0e3cb8 26.04%,#050c18 36.46%,#060e20 48.50%,#071634 58.59%,#0a2660 71.61%,#0c3080 78.12%,#0c40b0 87.24%,#0e44b0 100.00%)"></div>
<div class="a" style="left:0;top:970px;width:1536px;height:10px;background:linear-gradient(90deg,#1446c8 0.00%,#1242c0 13.02%,#0e3cb8 26.04%,#050c18 36.46%,#060e20 48.50%,#071634 58.59%,#0a2660 71.61%,#0c3080 78.12%,#0c40b0 87.24%,#0e44b0 100.00%)"></div>
<div class="a" style="left:0;top:980px;width:1536px;height:10px;background:linear-gradient(90deg,#1446c8 0.00%,#1242c0 13.02%,#0e3cb8 26.04%,#050c18 36.46%,#060e20 48.50%,#071634 58.59%,#0a2660 71.61%,#0c3080 78.12%,#0c40b0 87.24%,#0e44b0 100.00%)"></div>
<div class="a" style="left:0;top:990px;width:1536px;height:10px;background:linear-gradient(90deg,#1446c8 0.00%,#1242c0 13.02%,#0e3cb8 26.04%,#050c18 36.46%,#060e20 48.50%,#071634 58.59%,#0a2660 71.61%,#0c3080 78.12%,#0c40b0 87.24%,#0e44b0 100.00%)"></div>
<div class="a" style="left:0;top:1000px;width:1536px;height:10px;background:linear-gradient(90deg,#1446c8 0.00%,#1242c0 13.02%,#0e3cb8 26.04%,#050c18 36.46%,#060e20 48.50%,#071634 58.59%,#0a2660 71.61%,#0c3080 78.12%,#0c40b0 87.24%,#0e44b0 100.00%)"></div>
<div class="a" style="left:0;top:1010px;width:1536px;height:10px;background:linear-gradient(90deg,#1446c8 0.00%,#1242c0 13.02%,#0e3cb8 26.04%,#050c18 36.46%,#060e20 48.50%,#071634 58.59%,#0a2660 71.61%,#0c3080 78.12%,#0c40b0 87.24%,#0e44b0 100.00%)"></div>
<div class="a" style="left:557px;top:560px;width:979px;height:403px;background-image:radial-gradient(circle at 50% 50%, rgba(150,185,255,0.30) 0px, rgba(150,185,255,0.22) 1px, rgba(150,185,255,0) 1.6px);background-size:16.6px 22.1px;background-position:1.7px 26px;-webkit-mask-image:linear-gradient(180deg,rgba(0,0,0,0) 290px,rgba(0,0,0,1) 340px),radial-gradient(ellipse 750px 380px at 0px 403px,rgba(0,0,0,1) 45%,rgba(0,0,0,0) 100%);"></div>
<!-- kaspersky icon partial -->
<div class="a" style="left:20px;top:0;width:18px;height:7px;background:#f4f4f6"></div>
<svg width="1536" height="1020" style="left:0;top:0"><path d="M23.5 0 L26.5 6 L29 6 L28.5 0Z" fill="#1a2a80"/></svg>
<svg width="1536" height="1020" style="left:0;top:0"><path d="M42 -10 L65 -10 L65 1 L53.5 7.5 L42 1Z" fill="#2ec060"/></svg>

<div id="sidebar" class="a"></div>
<div id="panel" class="a"></div>
<div id="sep" class="a"></div>
<div id="hl" class="a"></div>
<div id="search" class="a"></div>
<div id="cursor" class="a"></div>

<svg width="1536" height="1020" style="left:0;top:0">
 <g fill="#fff">
  <rect x="22" y="87.6" width="23.5" height="2"/>
  <rect x="22" y="93.4" width="23.5" height="2"/>
  <rect x="22" y="99.1" width="23.5" height="2"/>
 </g>
 <path d="M24.5 162.5 L34 153 L43.5 162.5 M27 160.5 V171 H31 V165 H37 V171 H41 V160.5" fill="none" stroke="#fff" stroke-width="2" stroke-linejoin="miter"/>
 <!-- news icon -->
 <g fill="none" stroke="#111" stroke-width="1.9">
  <rect x="91.9" y="84.4" width="21.2" height="17"/>
  <line x1="91.9" y1="88.8" x2="113.1" y2="88.8"/>
  <rect x="94.6" y="91.8" width="5.6" height="6.8"/>
  <line x1="102" y1="92.2" x2="106" y2="92.2"/>
  <line x1="102" y1="95" x2="106" y2="95"/>
  <line x1="102" y1="97.8" x2="105" y2="97.8"/>
 </g>
 <!-- doc icon -->
 <path d="M161.3 83 H172.5 L178.2 88.8 V103.8 H161.3Z M172.5 83 V88.8 H178.2" fill="none" stroke="#111" stroke-width="1.9" stroke-linejoin="round"/>
 <!-- gear header -->
 <path d="M246.17 90.12 L246.59 91.43 L249.55 91.46 L249.55 95.14 L246.59 95.17 L246.17 96.48 L245.54 97.69 L247.61 99.81 L245.01 102.41 L242.89 100.34 L241.68 100.97 L240.37 101.39 L240.34 104.35 L236.66 104.35 L236.63 101.39 L235.32 100.97 L234.11 100.34 L231.99 102.41 L229.39 99.81 L231.46 97.69 L230.83 96.48 L230.41 95.17 L227.45 95.14 L227.45 91.46 L230.41 91.43 L230.83 90.12 L231.46 88.91 L229.39 86.79 L231.99 84.19 L234.11 86.26 L235.32 85.63 L236.63 85.21 L236.66 82.25 L240.34 82.25 L240.37 85.21 L241.68 85.63 L242.89 86.26 L245.01 84.19 L247.61 86.79 L245.54 88.91Z M242.10 93.30 A3.6 3.6 0 1 0 234.90 93.30 A3.6 3.6 0 1 0 242.10 93.30Z" fill="none" stroke="#111" stroke-width="1.7" stroke-linejoin="round"/>
 <!-- chevron -->
 <polyline points="512,88.3 523,99 534,88.3" fill="none" stroke="#111" stroke-width="1.6"/>
 <!-- settings gears -->
 <path d="M104.17 332.12 L104.59 333.43 L107.55 333.46 L107.55 337.14 L104.59 337.17 L104.17 338.48 L103.54 339.69 L105.61 341.81 L103.01 344.41 L100.89 342.34 L99.68 342.97 L98.37 343.39 L98.34 346.35 L94.66 346.35 L94.63 343.39 L93.32 342.97 L92.11 342.34 L89.99 344.41 L87.39 341.81 L89.46 339.69 L88.83 338.48 L88.41 337.17 L85.45 337.14 L85.45 333.46 L88.41 333.43 L88.83 332.12 L89.46 330.91 L87.39 328.79 L89.99 326.19 L92.11 328.26 L93.32 327.63 L94.63 327.21 L94.66 324.25 L98.34 324.25 L98.37 327.21 L99.68 327.63 L100.89 328.26 L103.01 326.19 L105.61 328.79 L103.54 330.91Z M100.10 335.30 A3.6 3.6 0 1 0 92.90 335.30 A3.6 3.6 0 1 0 100.10 335.30Z" fill="none" stroke="#111" stroke-width="1.6" stroke-linejoin="round"/>
 <path d="M104.17 383.32 L104.59 384.63 L107.55 384.66 L107.55 388.34 L104.59 388.37 L104.17 389.68 L103.54 390.89 L105.61 393.01 L103.01 395.61 L100.89 393.54 L99.68 394.17 L98.37 394.59 L98.34 397.55 L94.66 397.55 L94.63 394.59 L93.32 394.17 L92.11 393.54 L89.99 395.61 L87.39 393.01 L89.46 390.89 L88.83 389.68 L88.41 388.37 L85.45 388.34 L85.45 384.66 L88.41 384.63 L88.83 383.32 L89.46 382.11 L87.39 379.99 L89.99 377.39 L92.11 379.46 L93.32 378.83 L94.63 378.41 L94.66 375.45 L98.34 375.45 L98.37 378.41 L99.68 378.83 L100.89 379.46 L103.01 377.39 L105.61 379.99 L103.54 382.11Z M100.10 386.50 A3.6 3.6 0 1 0 92.90 386.50 A3.6 3.6 0 1 0 100.10 386.50Z" fill="none" stroke="#111" stroke-width="1.6" stroke-linejoin="round"/>
 <!-- sidebar gear -->
 <path d="M41.87 801.02 L42.29 802.33 L45.25 802.36 L45.25 806.04 L42.29 806.07 L41.87 807.38 L41.24 808.59 L43.31 810.71 L40.71 813.31 L38.59 811.24 L37.38 811.87 L36.07 812.29 L36.04 815.25 L32.36 815.25 L32.33 812.29 L31.02 811.87 L29.81 811.24 L27.69 813.31 L25.09 810.71 L27.16 808.59 L26.53 807.38 L26.11 806.07 L23.15 806.04 L23.15 802.36 L26.11 802.33 L26.53 801.02 L27.16 799.81 L25.09 797.69 L27.69 795.09 L29.81 797.16 L31.02 796.53 L32.33 796.11 L32.36 793.15 L36.04 793.15 L36.07 796.11 L37.38 796.53 L38.59 797.16 L40.71 795.09 L43.31 797.69 L41.24 799.81Z M37.80 804.20 A3.6 3.6 0 1 0 30.60 804.20 A3.6 3.6 0 1 0 37.80 804.20Z" fill="none" stroke="#fff" stroke-width="1.8" stroke-linejoin="round"/>
 <!-- feedback -->
 <g fill="#fff">
  <path d="M33 860.5 H44 V868.8 H39.5 L36.5 871.5 V868.8 H33Z"/>
  <circle cx="31.2" cy="869.5" r="4" stroke="#0a0c0f" stroke-width="1.6"/>
  <path d="M24 884 C24 877.5 27 875.5 31.2 875.5 C35.4 875.5 38.5 877.5 38.5 884Z"/>
 </g>
</svg>

<!-- disk cleanup icon big -->
<svg width="1536" height="1020" style="left:0;top:0">
 <defs>
  <linearGradient id="gold" x1="0" y1="0" x2="0" y2="1"><stop offset="0" stop-color="#e6d27a"/><stop offset="0.5" stop-color="#c9a830"/><stop offset="1" stop-color="#8a6a10"/></linearGradient>
  <linearGradient id="drv" x1="0" y1="0" x2="0" y2="1"><stop offset="0" stop-color="#f4f6f8"/><stop offset="1" stop-color="#c8ccd0"/></linearGradient>
 </defs>
 <path d="M88 205 Q88 202 92 202.5 L101 206 L100 211 L91 208 Q88 207.5 88 205Z" fill="#d8c860"/>
 <path d="M97 206 L121 211.5 L122.5 219 L103 222 L98 217Z" fill="#c4b040"/>
 <path d="M98 209 L121 214" stroke="#eadf90" stroke-width="1.3"/>
 <path d="M99 213.5 L121 217.5" stroke="#8a7014" stroke-width="1"/>
 <path d="M119.5 211 L122.5 212 L122.5 220 L119.5 221Z" fill="#6a4a08"/>
 <path d="M88 220.5 L111 217 L128 221.5 L128 227.5 L104.5 232 L88 227.5Z" fill="#eef1f4"/>
 <path d="M104.5 225 L128 221.5 L128 227.5 L104.5 232Z" fill="#cdd3d8"/>
 <path d="M88 220.5 L104.5 225 L104.5 232 L88 227.5Z" fill="#15181a"/>
 <circle cx="102" cy="229.3" r="0.9" fill="#9ad07a"/>
</svg>

<div id="taskbar" class="a"></div>
<div class="a ind" style="left:423px;width:57px"></div>
<div class="a ind" style="left:633px;width:56px"></div>
<div class="a ind" style="left:702px;width:57px"></div>
<div class="a ind" style="left:771px;width:57px"></div>
<svg width="1536" height="1020" style="left:0;top:0">
 <!-- windows logo -->
 <g fill="#fff">
  <path d="M23 982 L31 980.9 V990.6 H23Z"/><path d="M32.6 980.7 L45.9 979 V990.6 H32.6Z"/>
  <path d="M23 992.2 H31 V1001.8 L23 1000.8Z"/><path d="M32.6 992.2 H45.9 V1003.2 L32.6 1002Z"/>
 </g>
 <!-- search -->
 <circle cx="106" cy="988" r="7.5" fill="none" stroke="#fff" stroke-width="1.8"/>
 <line x1="100.5" y1="993.5" x2="91" y2="1003" stroke="#fff" stroke-width="2"/>
 <!-- task view -->
 <rect x="162.6" y="982.6" width="16" height="18.4" rx="1" fill="none" stroke="#fff" stroke-width="1.7"/>
 <path d="M159.5 985.2 H157 V998 H159.5 M182 985.2 H184.5 V998 H182" fill="none" stroke="#fff" stroke-width="1.6"/>
 <!-- edge -->
 <path d="M229.5 988.5 C231.5 980.5 237.5 976.5 244.5 976.5 C252 976.5 256.7 982 256.7 990 L256.7 994 L238.8 994 C239.5 997.5 243 999.8 247.5 999.8 C250.5 999.8 252.8 999 254.5 997.8 L254.5 1004 C252 1005.2 249 1005.8 246 1005.8 C236.5 1005.8 231.5 999.5 231.5 993 C231.5 990.5 232.5 988 233.5 986.5 C232 987 230.5 987.8 229.5 988.5Z M237.3 988.4 H248.2 C247.8 985 245.5 983.2 242.8 983.2 C240 983.2 237.8 985 237.3 988.4Z" fill="#3586f2" fill-rule="evenodd"/>
 <path d="M232 994 C232.3 988.5 235 984.3 240.5 982.4" stroke="#050608" stroke-width="1.4" fill="none"/>
 <!-- explorer -->
 <path d="M297.3 979 H310.7 L312.5 980.7 H327 V1002.7 H297.3Z" fill="#eed060"/>
 <rect x="297.3" y="982.3" width="29.7" height="20.4" fill="#f6e07c"/>
 <path d="M302.7 994 Q302.7 992 304.7 992 H320.3 Q322.3 992 322.3 994 V1002.5 Q322.3 1003.7 321 1003.7 H318.8 Q317.7 1003.7 317.7 1002.5 V997.3 H308 V1002.5 Q308 1003.7 306.8 1003.7 H304 Q302.7 1003.7 302.7 1002.5Z" fill="#48c4ee"/>
 <!-- store -->
 <path d="M366.5 982 H393 L396.5 984 V1008.5 L368 1007Z" fill="#fff"/>
 <path d="M374 982.5 C374 977.5 377 975 381 975 C385 975 388 977.5 388.5 982.5" fill="none" stroke="#fff" stroke-width="2"/>
 <g fill="#050608">
  <rect x="371" y="986.5" width="7" height="6.8"/><rect x="379.6" y="986.5" width="7" height="6.8"/>
  <rect x="371" y="994.8" width="7" height="6.6"/><rect x="379.6" y="994.8" width="7" height="6.6"/>
 </g>
 <!-- paint palette -->
 <path d="M435 995 C433 986 442 980 453 980.5 C462 981 467 986 465.5 991 C464 995 458 993 456.5 996.5 C455 1000 459 1002 455.5 1004.5 C451 1007 438 1005 435 995Z" fill="#bfe4f0"/>
 <circle cx="440.5" cy="993" r="2.5" fill="#d84a6a"/>
 <circle cx="446" cy="987" r="2.5" fill="#6ac048"/>
 <circle cx="453" cy="985.5" r="2.5" fill="#e8b040"/>
 <circle cx="449" cy="995" r="1.8" fill="#050608"/>
 <path d="M450 1007.5 L463 981 L465.5 982 L452.5 1008.5Z" fill="#e07830"/>
 <path d="M462 982 L465.5 975.5 L468.5 977.5 L465 983.5Z" fill="#e8c080"/>
 <!-- snipping tool -->
 <ellipse cx="512" cy="994.5" rx="8.5" ry="4.5" fill="#7a7478"/>
 <ellipse cx="518" cy="983.5" rx="11.5" ry="8" fill="#f4eef2" stroke="#d8406a" stroke-width="1.6" transform="rotate(-12 518 983.5)"/>
 <path d="M514 980 L527 1000 M524 980 L517 992" stroke="#909498" stroke-width="2"/>
 <ellipse cx="523" cy="1002.5" rx="2.6" ry="4.2" fill="none" stroke="#8cc4e8" stroke-width="1.8" transform="rotate(-20 523 1002.5)"/>
 <ellipse cx="532" cy="998" rx="2.6" ry="4.2" fill="none" stroke="#8cc4e8" stroke-width="1.8" transform="rotate(-50 532 998)"/>
 <!-- chrome -->
 <circle cx="591.2" cy="991.3" r="15.4" fill="#e34a3a"/>
 <path d="M591.2 991.3 L577.9 999 A15.4 15.4 0 0 1 577.9 983.6 L584 987 Z" fill="#45b04a"/>
 <path d="M591.2 991.3 L577.9 983.6 A15.4 15.4 0 0 0 591.2 1006.7 Z" fill="#45b04a"/>
 <path d="M591.2 991.3 L591.2 1006.7 A15.4 15.4 0 0 0 604.5 983.6 Z" fill="#f6c51a"/>
 <circle cx="591.2" cy="991.3" r="7.2" fill="#fff"/>
 <circle cx="591.2" cy="991.3" r="5.6" fill="#3f7de8"/>
 <!-- settings gear taskbar -->
 <path d="M669.75 987.45 L670.17 988.69 L673.16 988.72 L673.16 993.68 L670.17 993.71 L669.75 994.95 L669.17 996.12 L671.26 998.26 L667.76 1001.76 L665.62 999.67 L664.45 1000.25 L663.21 1000.67 L663.18 1003.66 L658.22 1003.66 L658.19 1000.67 L656.95 1000.25 L655.78 999.67 L653.64 1001.76 L650.14 998.26 L652.23 996.12 L651.65 994.95 L651.23 993.71 L648.24 993.68 L648.24 988.72 L651.23 988.69 L651.65 987.45 L652.23 986.28 L650.14 984.14 L653.64 980.64 L655.78 982.73 L656.95 982.15 L658.19 981.73 L658.22 978.74 L663.18 978.74 L663.21 981.73 L664.45 982.15 L665.62 982.73 L667.76 980.64 L671.26 984.14 L669.17 986.28Z M665.90 991.20 A5.2 5.2 0 1 0 655.50 991.20 A5.2 5.2 0 1 0 665.90 991.20Z" fill="#fff" fill-rule="evenodd"/>
 <!-- virtualbox -->
 <path d="M728.2 975 L741.5 981.5 L740.5 996 L727.5 1004 L716 997.5 L714.5 981.5Z" fill="#141c5a" stroke="#e8f0fa" stroke-width="2.2" stroke-linejoin="round"/>
 <path d="M714.5 981.5 L728 988.5 L741.5 981.5 M728 988.5 L727.5 1004" fill="none" stroke="#e8f0fa" stroke-width="2.2"/>
 <path d="M721 1002 Q727 1009 734 1002 L734 1005 Q727 1010 721 1005Z" fill="#c8d8f0"/>
 <!-- cleanup taskbar -->
 <path d="M785 984.5 Q785 982 788.5 982.5 L794 985 L810 988.5 L810.5 994 L795 996 L791 990 L787.5 987.5 Q785 987 785 984.5Z" fill="#d6c860"/>
 <path d="M795 987.5 L810 991" stroke="#efe4a0" stroke-width="1"/>
 <path d="M797 992 L808.5 994.5" stroke="#8a7418" stroke-width="1"/>
 <path d="M784.5 995.5 L800 992.5 L815 995.5 L815 1001 L798 1004.5 L784.5 1001.5Z" fill="#e8eef0"/>
 <path d="M786.5 996.5 L797 998.5 L797 1001.5 L786.5 999.5Z" fill="#1a1e22"/>

</svg>

<div id="dlg" class="a"></div>
<div id="dtitle" class="a"></div>
<svg width="1536" height="1020" style="left:0;top:0">
 <!-- title icon small -->
 <g transform="translate(757,186.5)">
  <path d="M1 2.5 L8 1 L22 1.5 L21 10.5 L8 10.5 L8 5.5 L3 4Z" fill="#b8a448"/>
  <path d="M4 3.5 H21" stroke="#e0d48a" stroke-width="1.4"/>
  <path d="M8 7.5 H21" stroke="#8a7a20" stroke-width="0.8"/>
  <rect x="3" y="11.5" width="19" height="5.5" rx="1" fill="#1e2326"/>
  <circle cx="19" cy="14.2" r="1" fill="#cfe8c0"/>
 </g>
 <path d="M1300 188 L1314 202 M1314 188 L1300 202" stroke="#6a6a6a" stroke-width="1.4"/>
</svg>
<div id="tabpage" class="a"></div>
<div id="tab2" class="a"></div>
<div id="tab1" class="a"></div>
<svg width="1536" height="1020" style="left:0;top:0">
 <!-- drive icon w/ windows -->
 <g>
  <rect x="778.5" y="272.5" width="5" height="5" fill="#3cc8e8"/>
  <rect x="785" y="272" width="7" height="5.5" fill="#3cc8e8"/>
  <rect x="778.5" y="279" width="5" height="5" fill="#3cc8e8"/>
  <rect x="785" y="279" width="7" height="5.5" fill="#3cc8e8"/>
  <path d="M778.5 288 L791 282.5 L815.5 283.5 L818.5 287 L818.5 296.5 L797 300.5 L779 296Z" fill="url(#drv)"/>
  <path d="M779 288.5 L795 292.5 L795 300 L779 296Z" fill="#1c2022"/>
  <circle cx="792.5" cy="296" r="1" fill="#c8e8b0"/>
 </g>
</svg>
<div id="list" class="a"></div>
<div id="rowhl" class="a"></div>
<div id="vsb" class="a"></div>
<div id="vthumb" class="a"></div>
<div id="hsb" class="a"></div>
<div id="hthumb" class="a"></div>
<div id="corner" class="a"></div>
<div id="grp" class="a"></div>
<div id="grplbl" class="a"></div>
<div class="a btn" style="left:1100px"></div>
<div class="a btn" style="left:1215px"></div>

<svg width="1536" height="1020" style="left:0;top:0">
<rect x="785" y="365.5" width="16.5" height="16.5" fill="#fff" stroke="#262626" stroke-width="1.8"/><polyline points="788,374.0 791.8,377.8 798.5,369.7" fill="none" stroke="#1a1a1a" stroke-width="1.8"/><path d="M811 365.0 H822 L827 370.0 V385.5 H811Z" fill="#f8f8f8" stroke="#8c8c8c" stroke-width="1"/><path d="M822 365.0 V370.0 H827" fill="none" stroke="#9a9a9a" stroke-width="1"/><rect x="785" y="389.7" width="16.5" height="16.5" fill="#fff" stroke="#262626" stroke-width="1.8"/><polyline points="788,398.2 791.8,402.0 798.5,393.9" fill="none" stroke="#1a1a1a" stroke-width="1.8"/><rect x="809.5" y="392.7" width="17.5" height="11.7" rx="2" fill="#3f8ee6" stroke="#2d64a8" stroke-width="0.9"/><path d="M810.5 394.7 H826" stroke="#6ab0f0" stroke-width="1"/><path d="M823.5 388.5 Q818 388.7 818 394.7" stroke="#3cc850" stroke-width="2.6" fill="none"/><path d="M814.5 394.2 L821.5 394.2 L818 399.7Z" fill="#2cb840"/><rect x="785" y="413.9" width="16.5" height="16.5" fill="#fff" stroke="#262626" stroke-width="1.8"/><polyline points="788,422.4 791.8,426.2 798.5,418.1" fill="none" stroke="#1a1a1a" stroke-width="1.8"/><path d="M811 413.4 H822 L827 418.4 V433.9 H811Z" fill="#f8f8f8" stroke="#8c8c8c" stroke-width="1"/><path d="M822 413.4 V418.4 H827" fill="none" stroke="#9a9a9a" stroke-width="1"/><rect x="785" y="438.1" width="16.5" height="16.5" fill="#fff" stroke="#262626" stroke-width="1.8"/><path d="M811 437.6 H822 L827 442.6 V458.1 H811Z" fill="#f8f8f8" stroke="#8c8c8c" stroke-width="1"/><path d="M822 437.6 V442.6 H827" fill="none" stroke="#9a9a9a" stroke-width="1"/>
 <g fill="none" stroke="#303030" stroke-width="2.1">
  <polyline points="1232.5,380.5 1237.3,375.2 1242,380.5"/>
  <polyline points="1232.5,451 1237.3,456.5 1242,451"/>
  <polyline points="794,474.2 787.5,478.5 794,482.8"/>
  <polyline points="1210,474 1216.5,478.3 1210,482.6"/>
 </g>
</svg>

<div class="t" style="left:17.00px;top:15.36px;font-size:16px;font-weight:400;color:#fff;letter-spacing:-0.012px;text-shadow:1px 1px 0 #000,0 0 1px #000,1px 1px 2px #000,0 0 3px #000;-webkit-text-stroke:0px;">Kaspersky</div>
<div class="t" style="left:38.90px;top:36.66px;font-size:16px;font-weight:400;color:#fff;letter-spacing:-0.566px;text-shadow:1px 1px 0 #000,0 0 1px #000,1px 1px 2px #000,0 0 3px #000;-webkit-text-stroke:0px;">Free</div>
<div class="t" style="left:427.90px;top:84.39px;font-size:17.5px;font-weight:400;color:#111;letter-spacing:0.589px;">Фильтры</div>
<div class="t" style="left:84.70px;top:142.69px;font-size:17.5px;font-weight:400;color:#111;letter-spacing:0.683px;-webkit-text-stroke:0.75px #111;">Лучшее соответствие</div>
<div class="t" style="left:147.60px;top:195.95px;font-size:20.5px;font-weight:400;color:#0b0f12;letter-spacing:0.257px;">Очистка диска</div>
<div class="t" style="left:147.40px;top:228.19px;font-size:17.5px;font-weight:400;color:#2c4a56;letter-spacing:0.535px;">Классическое приложение</div>
<div class="t" style="left:85.40px;top:279.61px;font-size:17px;font-weight:400;color:#111;letter-spacing:1.160px;-webkit-text-stroke:0.75px #111;">Параметры</div>
<div class="t" style="left:125.20px;top:325.42px;font-size:21px;font-weight:400;color:#111;letter-spacing:0.172px;">Очистить журнал местоположений</div>
<div class="t" style="left:125.20px;top:376.02px;font-size:21px;font-weight:400;color:#111;letter-spacing:0.118px;">Нажимайте клавиши по очереди для</div>
<div class="t" style="left:125.20px;top:404.82px;font-size:21px;font-weight:400;color:#111;letter-spacing:0.013px;">ввода сочетания клавиш</div>
<div class="t" style="left:85.70px;top:925.52px;font-size:21px;font-weight:400;color:#000;letter-spacing:0.741px;-webkit-text-stroke:0px;">оч</div>
<div class="t" style="left:787.20px;top:187.73px;font-size:16.5px;font-weight:400;color:#7a7a7a;letter-spacing:0.122px;">Очистка диска Windows (C:)</div>
<div class="t" style="left:764.80px;top:233.03px;font-size:16.5px;font-weight:400;color:#151520;letter-spacing:-0.421px;-webkit-text-stroke:0.3px currentColor;">Очистка диска</div>
<div class="t" style="left:888.40px;top:235.83px;font-size:16.5px;font-weight:400;color:#151520;letter-spacing:-0.380px;-webkit-text-stroke:0.3px currentColor;">Дополнительно</div>
<div class="t" style="left:835.40px;top:270.53px;font-size:16.5px;font-weight:400;color:#151520;letter-spacing:-0.363px;-webkit-text-stroke:0.3px currentColor;">Программа очистки диска может освободить до 0,98 ГБ</div>
<div class="t" style="left:835.40px;top:289.43px;font-size:16.5px;font-weight:400;color:#151520;letter-spacing:-0.818px;-webkit-text-stroke:0.3px currentColor;">на Windows (C:).</div>
<div class="t" style="left:775.40px;top:337.03px;font-size:16.5px;font-weight:400;color:#151520;letter-spacing:-0.605px;-webkit-text-stroke:0.3px currentColor;">Удалить следующие файлы:</div>
<div class="t" style="left:832.80px;top:367.63px;font-size:16.5px;font-weight:400;color:#151520;letter-spacing:-0.827px;-webkit-text-stroke:0.3px currentColor;">Временные файлы</div>
<div class="t" style="left:1165.60px;top:367.63px;font-size:16.5px;font-weight:400;color:#151520;letter-spacing:-0.817px;-webkit-text-stroke:0.3px currentColor;">185 МБ</div>
<div class="t" style="left:832.80px;top:391.83px;font-size:16.5px;font-weight:400;color:#151520;letter-spacing:-0.543px;-webkit-text-stroke:0.3px currentColor;">Временные файлы установки Windo...</div>
<div class="t" style="left:1167.40px;top:391.83px;font-size:16.5px;font-weight:400;color:#151520;letter-spacing:-0.351px;-webkit-text-stroke:0.3px currentColor;">556 КБ</div>
<div class="t" style="left:831.70px;top:416.03px;font-size:16.5px;font-weight:400;color:#151520;letter-spacing:-0.094px;-webkit-text-stroke:0.3px currentColor;">Эскизы</div>
<div class="t" style="left:1161.20px;top:416.03px;font-size:16.5px;font-weight:400;color:#151520;letter-spacing:-0.712px;-webkit-text-stroke:0.3px currentColor;">18,0 МБ</div>
<div class="t" style="left:832.80px;top:440.23px;font-size:16.5px;font-weight:400;color:#151520;letter-spacing:-0.541px;-webkit-text-stroke:0.3px currentColor;">История файлов пользователя</div>
<div class="t" style="left:1172.20px;top:440.23px;font-size:16.5px;font-weight:400;color:#151520;letter-spacing:-0.557px;-webkit-text-stroke:0.3px currentColor;">0 байт</div>
<div class="t" style="left:774.80px;top:502.53px;font-size:16.5px;font-weight:400;color:#151520;letter-spacing:-0.370px;-webkit-text-stroke:0.3px currentColor;">Объем высвобождаемого пространства:</div>
<div class="t" style="left:1183.40px;top:502.53px;font-size:16.5px;font-weight:400;color:#151520;letter-spacing:-0.610px;-webkit-text-stroke:0.3px currentColor;">0,98 ГБ</div>
<div class="t" style="left:787.40px;top:529.83px;font-size:16.5px;font-weight:400;color:#151520;letter-spacing:-0.674px;-webkit-text-stroke:0.3px currentColor;">Описание</div>
<div class="t" style="left:789.10px;top:558.53px;font-size:16.5px;font-weight:400;color:#151520;letter-spacing:-0.277px;-webkit-text-stroke:0.3px currentColor;">Файлы установки, которые использует программа</div>
<div class="t" style="left:787.40px;top:577.03px;font-size:16.5px;font-weight:400;color:#151520;letter-spacing:-0.476px;-webkit-text-stroke:0.3px currentColor;">установки Windows.  Эти файлы остаются после процесса</div>
<div class="t" style="left:787.40px;top:595.53px;font-size:16.5px;font-weight:400;color:#151520;letter-spacing:-0.399px;-webkit-text-stroke:0.3px currentColor;">установки и могут быть удалены без последствий.</div>
<div class="t" style="left:775.70px;top:754.66px;font-size:16px;font-weight:400;color:#1c4fc4;letter-spacing:-0.043px;text-decoration:underline;text-underline-offset:2px;">Как работает очистка диска?</div>
<div class="t" style="left:1139.60px;top:805.53px;font-size:16.5px;font-weight:400;color:#151520;letter-spacing:0.160px;-webkit-text-stroke:0.3px currentColor;">OK</div>
<div class="t" style="left:1238.10px;top:805.53px;font-size:16.5px;font-weight:400;color:#151520;letter-spacing:-0.700px;-webkit-text-stroke:0.3px currentColor;">Отмена</div>

</body></html>
